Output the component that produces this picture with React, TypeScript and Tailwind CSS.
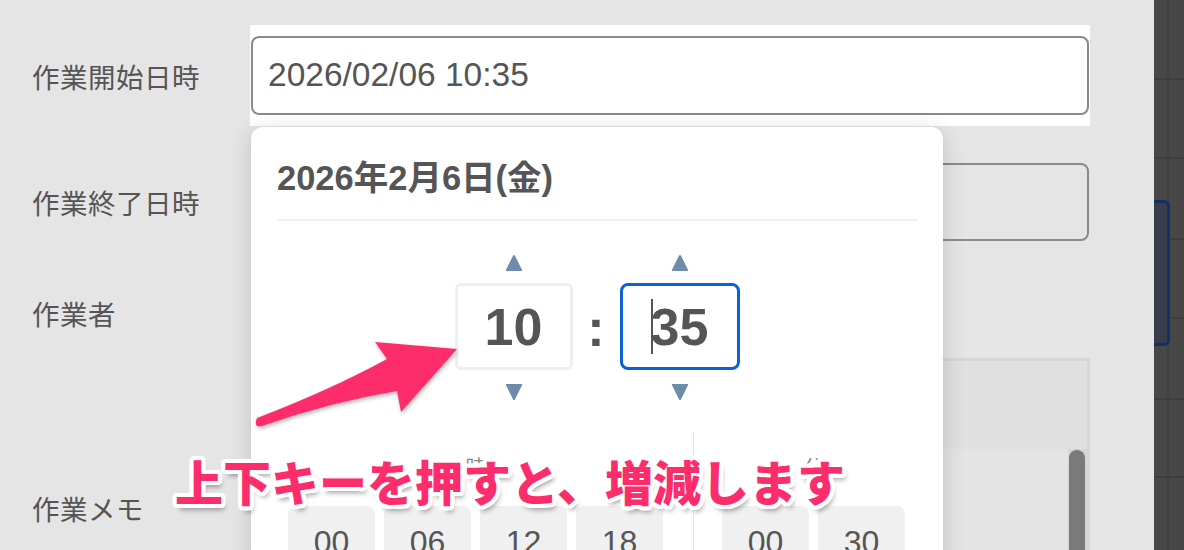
import React from 'react';

const JP = "font-['Liberation_Sans','Noto_Sans_CJK_JP',sans-serif]";

function Tri({ down = false }: { down?: boolean }) {
  return (
    <svg width="18" height="18" viewBox="0 0 18 18" className="block">
      {down ? (
        <path d="M1.5 1 H16.5 Q17.6 1 17 2.2 L9.9 16.4 Q9 17.6 8.1 16.4 L1 2.2 Q0.4 1 1.5 1 Z" fill="#6d8bab" />
      ) : (
        <path d="M1.5 17 H16.5 Q17.6 17 17 15.8 L9.9 1.6 Q9 0.4 8.1 1.6 L1 15.8 Q0.4 17 1.5 17 Z" fill="#6d8bab" />
      )}
    </svg>
  );
}

function Label({ text }: { text: string }) {
  return (
    <div className="w-[250px] shrink-0 pl-[32px] pt-[6px] text-[27.5px] leading-[36px] text-[#555] tracking-[0.5px]">
      {text}
    </div>
  );
}

function Slot({ value }: { value: string }) {
  return (
    <div className="h-[60px] rounded-[8px] bg-[#f0f0f0] pt-[18px] text-center text-[32px] leading-[36px] text-[#555]">
      {value}
    </div>
  );
}

const hours = ['00', '06', '12', '18'];
const minutes = ['00', '30'];

const outline =
  "[text-shadow:4px_0_0_#fff,-4px_0_0_#fff,0_4px_0_#fff,0_-4px_0_#fff,3px_3px_0_#fff,-3px_3px_0_#fff,3px_-3px_0_#fff,-3px_-3px_0_#fff,4px_2px_0_#fff,-4px_2px_0_#fff,4px_-2px_0_#fff,-4px_-2px_0_#fff,2px_4px_0_#fff,-2px_4px_0_#fff,2px_-4px_0_#fff,-2px_-4px_0_#fff,3px_6px_5px_rgba(0,0,0,0.35)]";

export default function App() {
  return (
    <div className={`relative flex w-[1184px] h-[550px] overflow-hidden bg-[#e5e5e5] ${JP}`}>
      <main className="relative flex-1">
        <div className="flex flex-col pt-[25px]">
          <div className="flex h-[101px] items-center">
            <Label text="作業開始日時" />
            <div className="h-full w-[840px] bg-white px-[1px] py-[11px]">
              <div className="flex h-full items-center rounded-[8px] border-2 border-[#8a8a8a] pl-[15px] text-[33.5px] text-[#555]">
                2026/02/06 10:35
              </div>
            </div>
          </div>

          <div className="mt-[37px] flex h-[78px] items-center">
            <Label text="作業終了日時" />
            <div className="ml-[1px] h-full w-[838px] rounded-[8px] border-2 border-[#8a8a8a]" />
          </div>

          <div className="mt-[33px] flex h-[78px] items-center">
            <Label text="作業者" />
          </div>

          <div className="mt-[6px] flex items-start">
            <div className="pt-[129px]">
              <Label text="作業メモ" />
            </div>
            <div className="ml-[1px] w-[839px] border-[3px] border-[#d6d6d6]">
              <div className="h-[88px] bg-[#e0e0e0]" />
              <div className="flex h-[200px] justify-end bg-[#e4e4e4]">
                <div className="w-[19px] bg-[#d6d6d6] pl-[1px] pt-[1px]">
                  <div className="h-[300px] w-[16px] rounded-full bg-[#7a7a7a]" />
                </div>
              </div>
            </div>
          </div>
        </div>

        {/* date-time picker popover */}
        <div className="absolute left-[251px] top-[127px] h-[440px] w-[692px] rounded-[12px] bg-white px-[26px] shadow-[0_4px_22px_rgba(0,0,0,0.16)]">
          <div className="pt-[31px] text-[34.5px] font-bold leading-[40px] text-[#555]">
            2026年2月6日(金)
          </div>
          <div className="mt-[21px] h-[2px] bg-[#efefef]" />

          <div className="mt-[33px] flex justify-center">
            <div className="flex w-[118px] flex-col items-center">
              <Tri />
              <div className="mt-[11px] flex h-[87px] w-[118px] items-center justify-center rounded-[6px] border-[3px] border-[#efefef] text-[52px] font-bold text-[#555]">
                10
              </div>
              <div className="mt-[13px]">
                <Tri down />
              </div>
            </div>
            <div className="flex w-[47px] items-center justify-center text-[52px] font-bold text-[#555]">
              :
            </div>
            <div className="flex w-[120px] flex-col items-center">
              <Tri />
              <div className="mt-[11px] flex h-[87px] w-[120px] items-center justify-center rounded-[8px] border-[3px] border-[#0b62d2] text-[52px] font-bold text-[#555]">
                <span className="mr-[-2px] inline-block h-[55px] w-[2px] bg-[#555]" />
                35
              </div>
              <div className="mt-[13px]">
                <Tri down />
              </div>
            </div>
          </div>

          <div className="mt-[31px] flex">
            <div className="w-[417px] border-r-[1.5px] border-[#e6e6e6] pl-[11px]">
              <div className="w-[375px]">
                <div className="mt-[24px] text-center text-[20px] leading-[24px] text-[#888]">時</div>
                <div className="mt-[26px] grid grid-cols-4 gap-[9px]">
                  {hours.map((h) => (
                    <Slot key={h} value={h} />
                  ))}
                </div>
              </div>
            </div>
            <div className="pl-[28px]">
              <div className="w-[183px]">
                <div className="mt-[24px] text-center text-[20px] leading-[24px] text-[#888]">分</div>
                <div className="mt-[26px] grid grid-cols-2 gap-[9px]">
                  {minutes.map((m) => (
                    <Slot key={m} value={m} />
                  ))}
                </div>
              </div>
            </div>
          </div>
        </div>

        {/* annotation */}
        <svg
          className="absolute left-[240px] top-[330px] [filter:drop-shadow(1px_2px_2px_rgba(0,0,0,0.3))]"
          width="230"
          height="100"
          viewBox="240 330 230 100"
        >
          <path
            d="M257 418 Q330 390 387 359 L375 342 L457 349 L401 412 L397 391 Q330 402 262 426 Q253 428 257 418 Z"
            fill="#fd2d6c"
          />
        </svg>
        <div
          className={`absolute left-[175px] top-[456px] whitespace-nowrap text-[48px] font-black leading-[48px] text-[#fd2d6c] font-['Noto_Sans_CJK_JP',sans-serif] ${outline}`}
        >
          上下キーを押すと、増減します
        </div>
      </main>

      <aside className="relative w-[30px] shrink-0 bg-[#474747]">
        <div className="flex flex-col">
          {[80, 79, 81, 79, 81, 78, 80].map((h, i) => (
            <div key={i} className="flex border-b-2 border-[#3d3d3d]" style={{ height: h }}>
              <div className="h-full w-[15px] border-r-2 border-[#404040]" />
            </div>
          ))}
        </div>
        <div className="absolute left-0 top-[200px] h-[146px] w-[16px] rounded-r-[6px] border-[3px] border-l-0 border-[#152f66] bg-[#383d4b]" />
      </aside>
    </div>
  );
}
